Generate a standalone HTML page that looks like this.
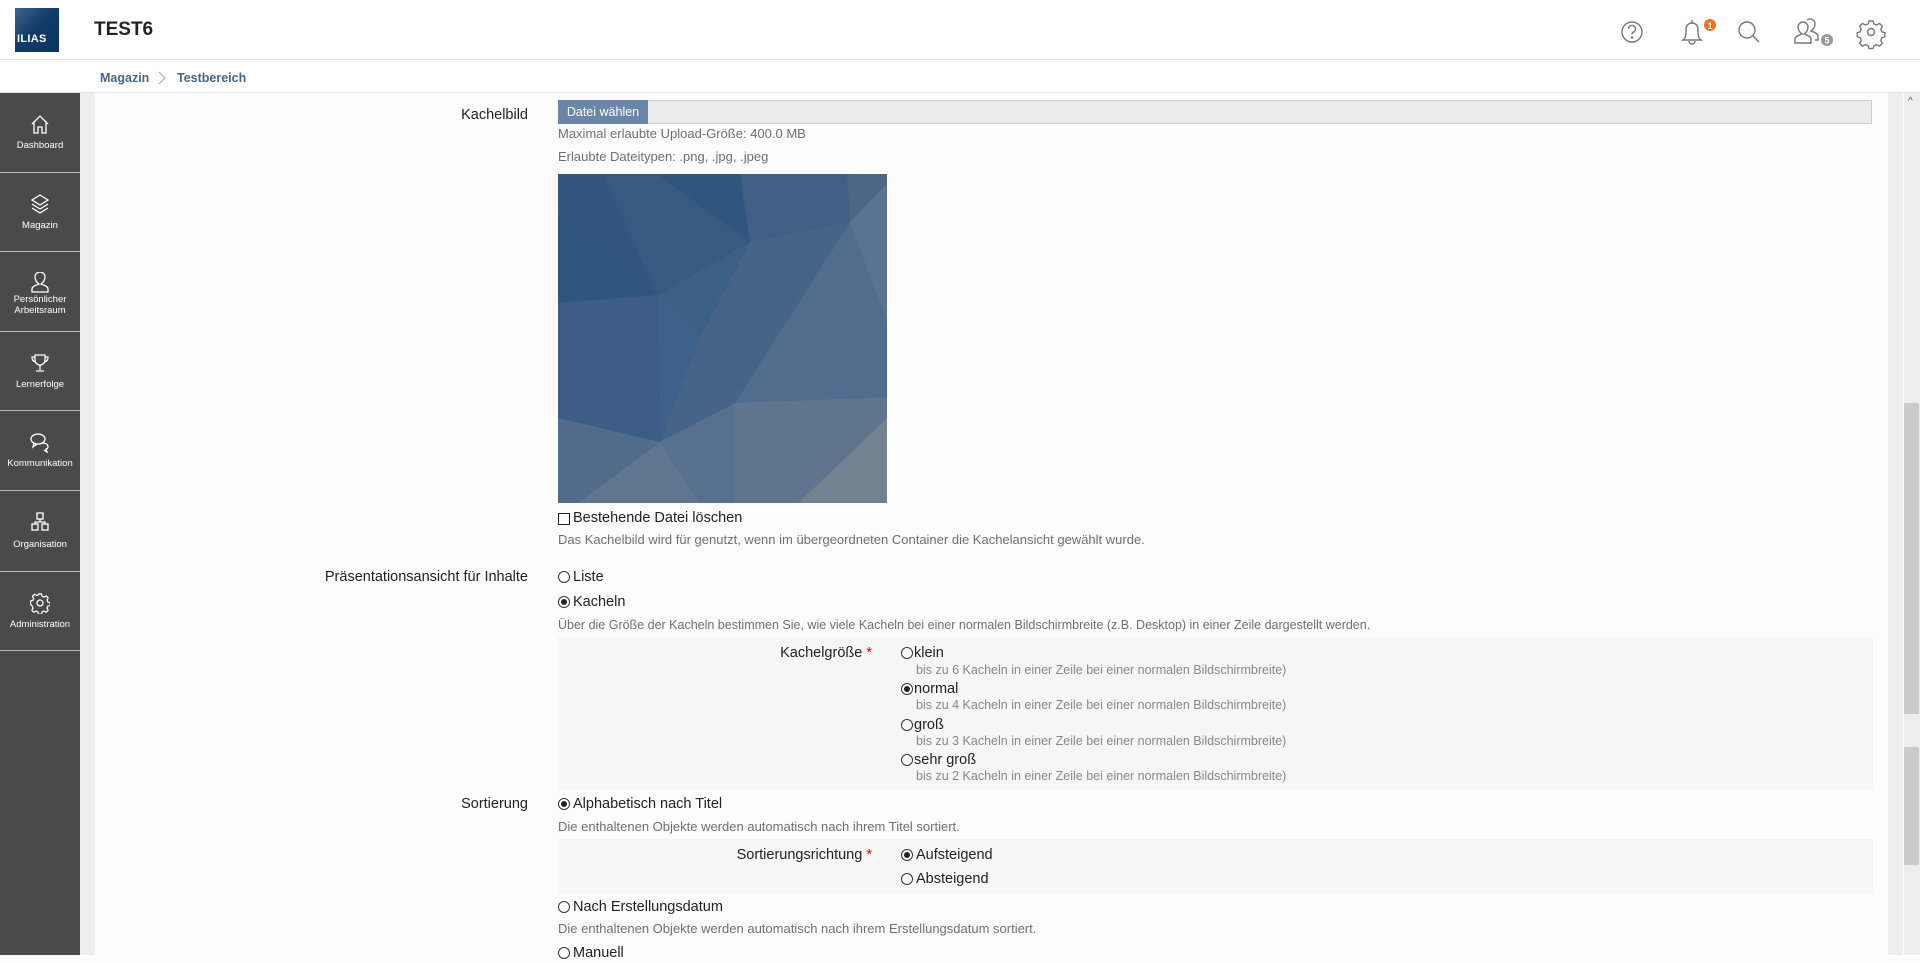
<!DOCTYPE html>
<html><head><meta charset="utf-8">
<style>
*{margin:0;padding:0;box-sizing:border-box}
body{width:1920px;height:955px;overflow:hidden;background:#fcfcfc;font-family:"Liberation Sans",sans-serif;color:#161616;position:relative}
.a{position:absolute;white-space:nowrap}
.l{font-size:14.5px;height:20px;line-height:20px;color:#222}
.d{font-size:13px;height:16px;line-height:16px;color:#6f6f6f}
.s{font-size:12.5px;height:14px;line-height:14px;color:#888}
.r{position:absolute;width:12px;height:12px;border:1px solid #333;border-radius:50%;background:#fff}
.r.c::after{content:"";position:absolute;left:2px;top:2px;width:6px;height:6px;border-radius:50%;background:#222}
.nav{position:absolute;left:0;width:80px;border-bottom:1px solid #bbb;color:#fff;font-size:9.5px;text-align:center}
.nav svg{position:absolute;left:30px;top:20px}
.nav span{position:absolute;left:0;width:80px;line-height:11px}
.star{color:#d00}
</style></head><body>
<!-- header -->
<div class="a" style="left:0;top:0;width:1920px;height:60px;background:#fff;border-bottom:1px solid #ddd"></div>
<div class="a" style="left:15px;top:8px;width:44px;height:44px;background:linear-gradient(135deg,#3d6690 0%,#133c68 45%,#0b3360 100%)"></div>
<div class="a" style="left:17px;top:33px;color:#fff;font-size:11px;font-weight:bold;letter-spacing:.3px">ILIAS</div>
<div class="a" style="left:94px;top:18px;font-size:19px;font-weight:bold;color:#222;line-height:24px">TEST6</div>
<svg class="a" style="left:1600px;top:10px" width="300" height="45" viewBox="0 0 300 45" fill="none" stroke="#777" stroke-width="1.4">
<circle cx="32" cy="22" r="10"/>
<path d="M28.5 19a3.5 3.5 0 1 1 4.5 3.3c-1 .4-1 1-1 2.2"/><circle cx="32" cy="27.5" r=".6" fill="#777"/>
<path d="M83 30h18c-3-2-3-5-3-11a6 6 0 0 0-12 0c0 6 0 9-3 11z"/><path d="M89 31a3 3 0 0 0 6 0"/><path d="M92 10v3"/>
<circle cx="110" cy="15" r="6" fill="#f37021" stroke="none"/><text x="110" y="19" font-size="9" font-weight="bold" fill="#fff" stroke="none" text-anchor="middle" font-family="Liberation Sans">1</text>
<circle cx="147" cy="20" r="8"/><path d="M153 26l6 6"/>
<path d="M195 33v-4c0-3 5-4 7-5-3-2-4-4-4-7a5 5 0 0 1 10 0c0 3-1 5-4 7 2 1 7 2 7 5v4z"/><path d="M207 10a5 5 0 0 1 8 4c0 3-1 5-4 7 2 1 7 2 7 5v4h-3"/>
<circle cx="227" cy="30" r="6" fill="#999" stroke="none"/><text x="227" y="33.5" font-size="9" font-weight="bold" fill="#fff" stroke="none" text-anchor="middle" font-family="Liberation Sans">5</text>
<circle cx="271" cy="22" r="3.5"/>
<path d="M269 11h4l1 3 2.5 1 3-1.5 2.8 2.8-1.5 3 1 2.5 3 1v4l-3 1-1 2.5 1.5 3-2.8 2.8-3-1.5-2.5 1-1 3h-4l-1-3-2.5-1-3 1.5-2.8-2.8 1.5-3-1-2.5-3-1v-4l3-1 1-2.5-1.5-3 2.8-2.8 3 1.5 2.5-1z"/>
</svg>
<!-- breadcrumb -->
<div class="a" style="left:0;top:61px;width:1920px;height:32px;background:#fff;border-bottom:1px solid #e6e6e6"></div>
<div class="a" style="left:100px;top:69px;font-size:12.5px;font-weight:bold;color:#4c6586;line-height:18px">Magazin</div>
<svg class="a" style="left:157px;top:70px" width="10" height="16"><path d="M2 2l6 6-6 6" fill="none" stroke="#aaa" stroke-width="1.2"/></svg>
<div class="a" style="left:177px;top:69px;font-size:12.5px;font-weight:bold;color:#4c6586;line-height:18px">Testbereich</div>
<!-- sidebar -->
<div class="a" style="left:0;top:93px;width:80px;height:862px;background:#4a4a4a"></div>
<div class="a" style="left:80px;top:93px;width:15px;height:862px;background:#eee"></div>
<div class="nav" style="top:93px;height:80px"><svg width="20" height="22" viewBox="0 0 20 22" fill="none" stroke="#fff" stroke-width="1.3"><path d="M2 11L10 3l8 8M4 9v11h4v-6h4v6h4V9"/></svg><span style="top:47px">Dashboard</span></div>
<div class="nav" style="top:173px;height:79px"><svg width="20" height="22" viewBox="0 0 20 22" fill="none" stroke="#fff" stroke-width="1.3"><path d="M10 2l8 5-8 5-8-5z"/><path d="M2 11l8 5 8-5"/><path d="M2 15l8 5 8-5"/></svg><span style="top:47px">Magazin</span></div>
<div class="nav" style="top:252px;height:80px"><svg width="20" height="22" viewBox="0 0 20 22" fill="none" stroke="#fff" stroke-width="1.3"><path d="M2 20v-3c0-3 5-4 7-5-3-2-4-4-4-7a5 5 0 0 1 10 0c0 3-1 5-4 7 2 1 7 2 7 5v3z"/></svg><span style="top:42px">Persönlicher<br>Arbeitsraum</span></div>
<div class="nav" style="top:332px;height:79px"><svg width="20" height="22" viewBox="0 0 20 22" fill="none" stroke="#fff" stroke-width="1.3"><path d="M5 3h10v5a5 5 0 0 1-10 0z"/><path d="M5 5H2c0 3 1 4 3 5M15 5h3c0 3-1 4-3 5M10 13v5M6 19h8"/></svg><span style="top:47px">Lernerfolge</span></div>
<div class="nav" style="top:411px;height:80px"><svg width="20" height="22" viewBox="0 0 20 22" fill="none" stroke="#fff" stroke-width="1.3"><ellipse cx="8" cy="8" rx="7" ry="5"/><path d="M4 12l-1 4 4-3M12 12c3 0 6 1 6 4 0 1-1 2-2 2l1 3-3-2"/></svg><span style="top:47px">Kommunikation</span></div>
<div class="nav" style="top:491px;height:81px"><svg width="20" height="22" viewBox="0 0 20 22" fill="none" stroke="#fff" stroke-width="1.3"><rect x="7" y="2" width="6" height="6"/><rect x="2" y="13" width="6" height="6"/><rect x="12" y="13" width="6" height="6"/><path d="M10 8v3M5 13v-2h10v2"/></svg><span style="top:48px">Organisation</span></div>
<div class="nav" style="top:572px;height:79px"><svg width="20" height="22" viewBox="0 0 20 22" fill="none" stroke="#fff" stroke-width="1.3"><circle cx="10" cy="11" r="3"/><path d="M8.5 2h3l.7 2.5 2 .8 2.3-1.2 2.1 2.1-1.2 2.3.8 2 2.5.7v3l-2.5.7-.8 2 1.2 2.3-2.1 2.1-2.3-1.2-2 .8-.7 2.5h-3l-.7-2.5-2-.8-2.3 1.2-2.1-2.1 1.2-2.3-.8-2L0 12.5v-3l2.5-.7.8-2-1.2-2.3 2.1-2.1 2.3 1.2 2-.8z" transform="translate(0.5 0) scale(.95)"/></svg><span style="top:47px">Administration</span></div>
<!-- right gutter + scrollbar -->
<div class="a" style="left:1888px;top:93px;width:15px;height:862px;background:#eee"></div>
<div class="a" style="left:1904px;top:93px;width:16px;height:862px;background:#eee"></div>
<div class="a" style="left:1908px;top:96px;font-size:10px;color:#555">&#94;</div>
<div class="a" style="left:1904px;top:403px;width:15px;height:311px;background:#cbcbcb"></div>
<div class="a" style="left:1904px;top:747px;width:15px;height:118px;background:#cbcbcb"></div>
<!-- form -->
<div class="a l" style="right:1392px;top:105px">Kachelbild</div>
<div class="a" style="left:558px;top:100px;width:1314px;height:24px;background:#ececec;border:1px solid #ccc"></div>
<div class="a" style="left:558px;top:100px;width:90px;height:24px;background:#6b86a9;color:#fff;font-size:12.5px;line-height:24px;text-align:center">Datei wählen</div>
<div class="a d" style="left:558px;top:126px">Maximal erlaubte Upload-Größe: 400.0 MB</div>
<div class="a d" style="left:558px;top:149px">Erlaubte Dateitypen: .png, .jpg, .jpeg</div>
<svg class="a" style="left:558px;top:174px" width="329" height="329" viewBox="0 0 329 329">
<rect width="329" height="329" fill="#3d5f86"/>
<polygon points="0,0 45,0 100,121 0,39" fill="#335680"/>
<polygon points="45,0 182,0 192,68 100,121" fill="#375a80"/>
<polygon points="99,0 182,0 192,68" fill="#30567e"/>
<polygon points="182,0 289,0 292,48 192,68" fill="#3f6084"/>
<polygon points="289,0 329,0 329,9 292,48" fill="#4b6686"/>
<polygon points="292,48 329,9 329,149" fill="#5a7390"/>
<polygon points="0,39 100,121 0,129" fill="#30557e"/>
<polygon points="100,121 192,68 142,164" fill="#3c5f86"/>
<polygon points="192,68 292,48 177,229 142,164" fill="#466488"/>
<polygon points="292,48 329,149 329,223 177,229" fill="#516d8d"/>
<polygon points="0,129 100,121 102,268 0,244" fill="#3c5e86"/>
<polygon points="100,121 142,164 102,268" fill="#3e6189"/>
<polygon points="142,164 177,229 102,268" fill="#456588"/>
<polygon points="0,244 102,268 20,329 0,329" fill="#516b8a"/>
<polygon points="102,268 142,329 20,329" fill="#607690"/>
<polygon points="102,268 177,229 177,329 142,329" fill="#57708e"/>
<polygon points="177,229 329,223 329,244 240,329 177,329" fill="#5f748d"/>
<polygon points="329,244 329,329 240,329" fill="#72828f"/>
</svg>
<div class="a" style="left:558px;top:513px;width:12px;height:12px;border:1px solid #222;background:#fff"></div>
<div class="a l" style="left:573px;top:508px">Bestehende Datei löschen</div>
<div class="a d" style="left:558px;top:532px">Das Kachelbild wird für genutzt, wenn im übergeordneten Container die Kachelansicht gewählt wurde.</div>

<div class="a l" style="right:1392px;top:567px">Präsentationsansicht für Inhalte</div>
<div class="r" style="left:558px;top:571px"></div><div class="a l" style="left:573px;top:567px">Liste</div>
<div class="r c" style="left:558px;top:596px"></div><div class="a l" style="left:573px;top:592px">Kacheln</div>
<div class="a d" style="left:558px;top:617px;font-size:12.5px">Über die Größe der Kacheln bestimmen Sie, wie viele Kacheln bei einer normalen Bildschirmbreite (z.B. Desktop) in einer Zeile dargestellt werden.</div>
<div class="a" style="left:558px;top:637px;width:1315px;height:153px;background:#f6f6f6"></div>
<div class="a l" style="right:1048px;top:643px">Kachelgröße <span class="star">*</span></div>
<div class="r" style="left:901px;top:647px"></div><div class="a l" style="left:914px;top:643px">klein</div>
<div class="a s" style="left:916px;top:663px">bis zu 6 Kacheln in einer Zeile bei einer normalen Bildschirmbreite)</div>
<div class="r c" style="left:901px;top:683px"></div><div class="a l" style="left:914px;top:679px">normal</div>
<div class="a s" style="left:916px;top:698px">bis zu 4 Kacheln in einer Zeile bei einer normalen Bildschirmbreite)</div>
<div class="r" style="left:901px;top:719px"></div><div class="a l" style="left:914px;top:715px">groß</div>
<div class="a s" style="left:916px;top:734px">bis zu 3 Kacheln in einer Zeile bei einer normalen Bildschirmbreite)</div>
<div class="r" style="left:901px;top:754px"></div><div class="a l" style="left:914px;top:750px">sehr groß</div>
<div class="a s" style="left:916px;top:769px">bis zu 2 Kacheln in einer Zeile bei einer normalen Bildschirmbreite)</div>

<div class="a l" style="right:1392px;top:794px">Sortierung</div>
<div class="r c" style="left:558px;top:798px"></div><div class="a l" style="left:573px;top:794px">Alphabetisch nach Titel</div>
<div class="a d" style="left:558px;top:819px">Die enthaltenen Objekte werden automatisch nach ihrem Titel sortiert.</div>
<div class="a" style="left:558px;top:839px;width:1315px;height:55px;background:#f6f6f6"></div>
<div class="a l" style="right:1048px;top:845px">Sortierungsrichtung <span class="star">*</span></div>
<div class="r c" style="left:901px;top:849px"></div><div class="a l" style="left:916px;top:845px">Aufsteigend</div>
<div class="r" style="left:901px;top:873px"></div><div class="a l" style="left:916px;top:869px">Absteigend</div>
<div class="r" style="left:558px;top:901px"></div><div class="a l" style="left:573px;top:897px">Nach Erstellungsdatum</div>
<div class="a d" style="left:558px;top:921px">Die enthaltenen Objekte werden automatisch nach ihrem Erstellungsdatum sortiert.</div>
<div class="r" style="left:558px;top:947px"></div><div class="a l" style="left:573px;top:943px">Manuell</div>
</body></html>
